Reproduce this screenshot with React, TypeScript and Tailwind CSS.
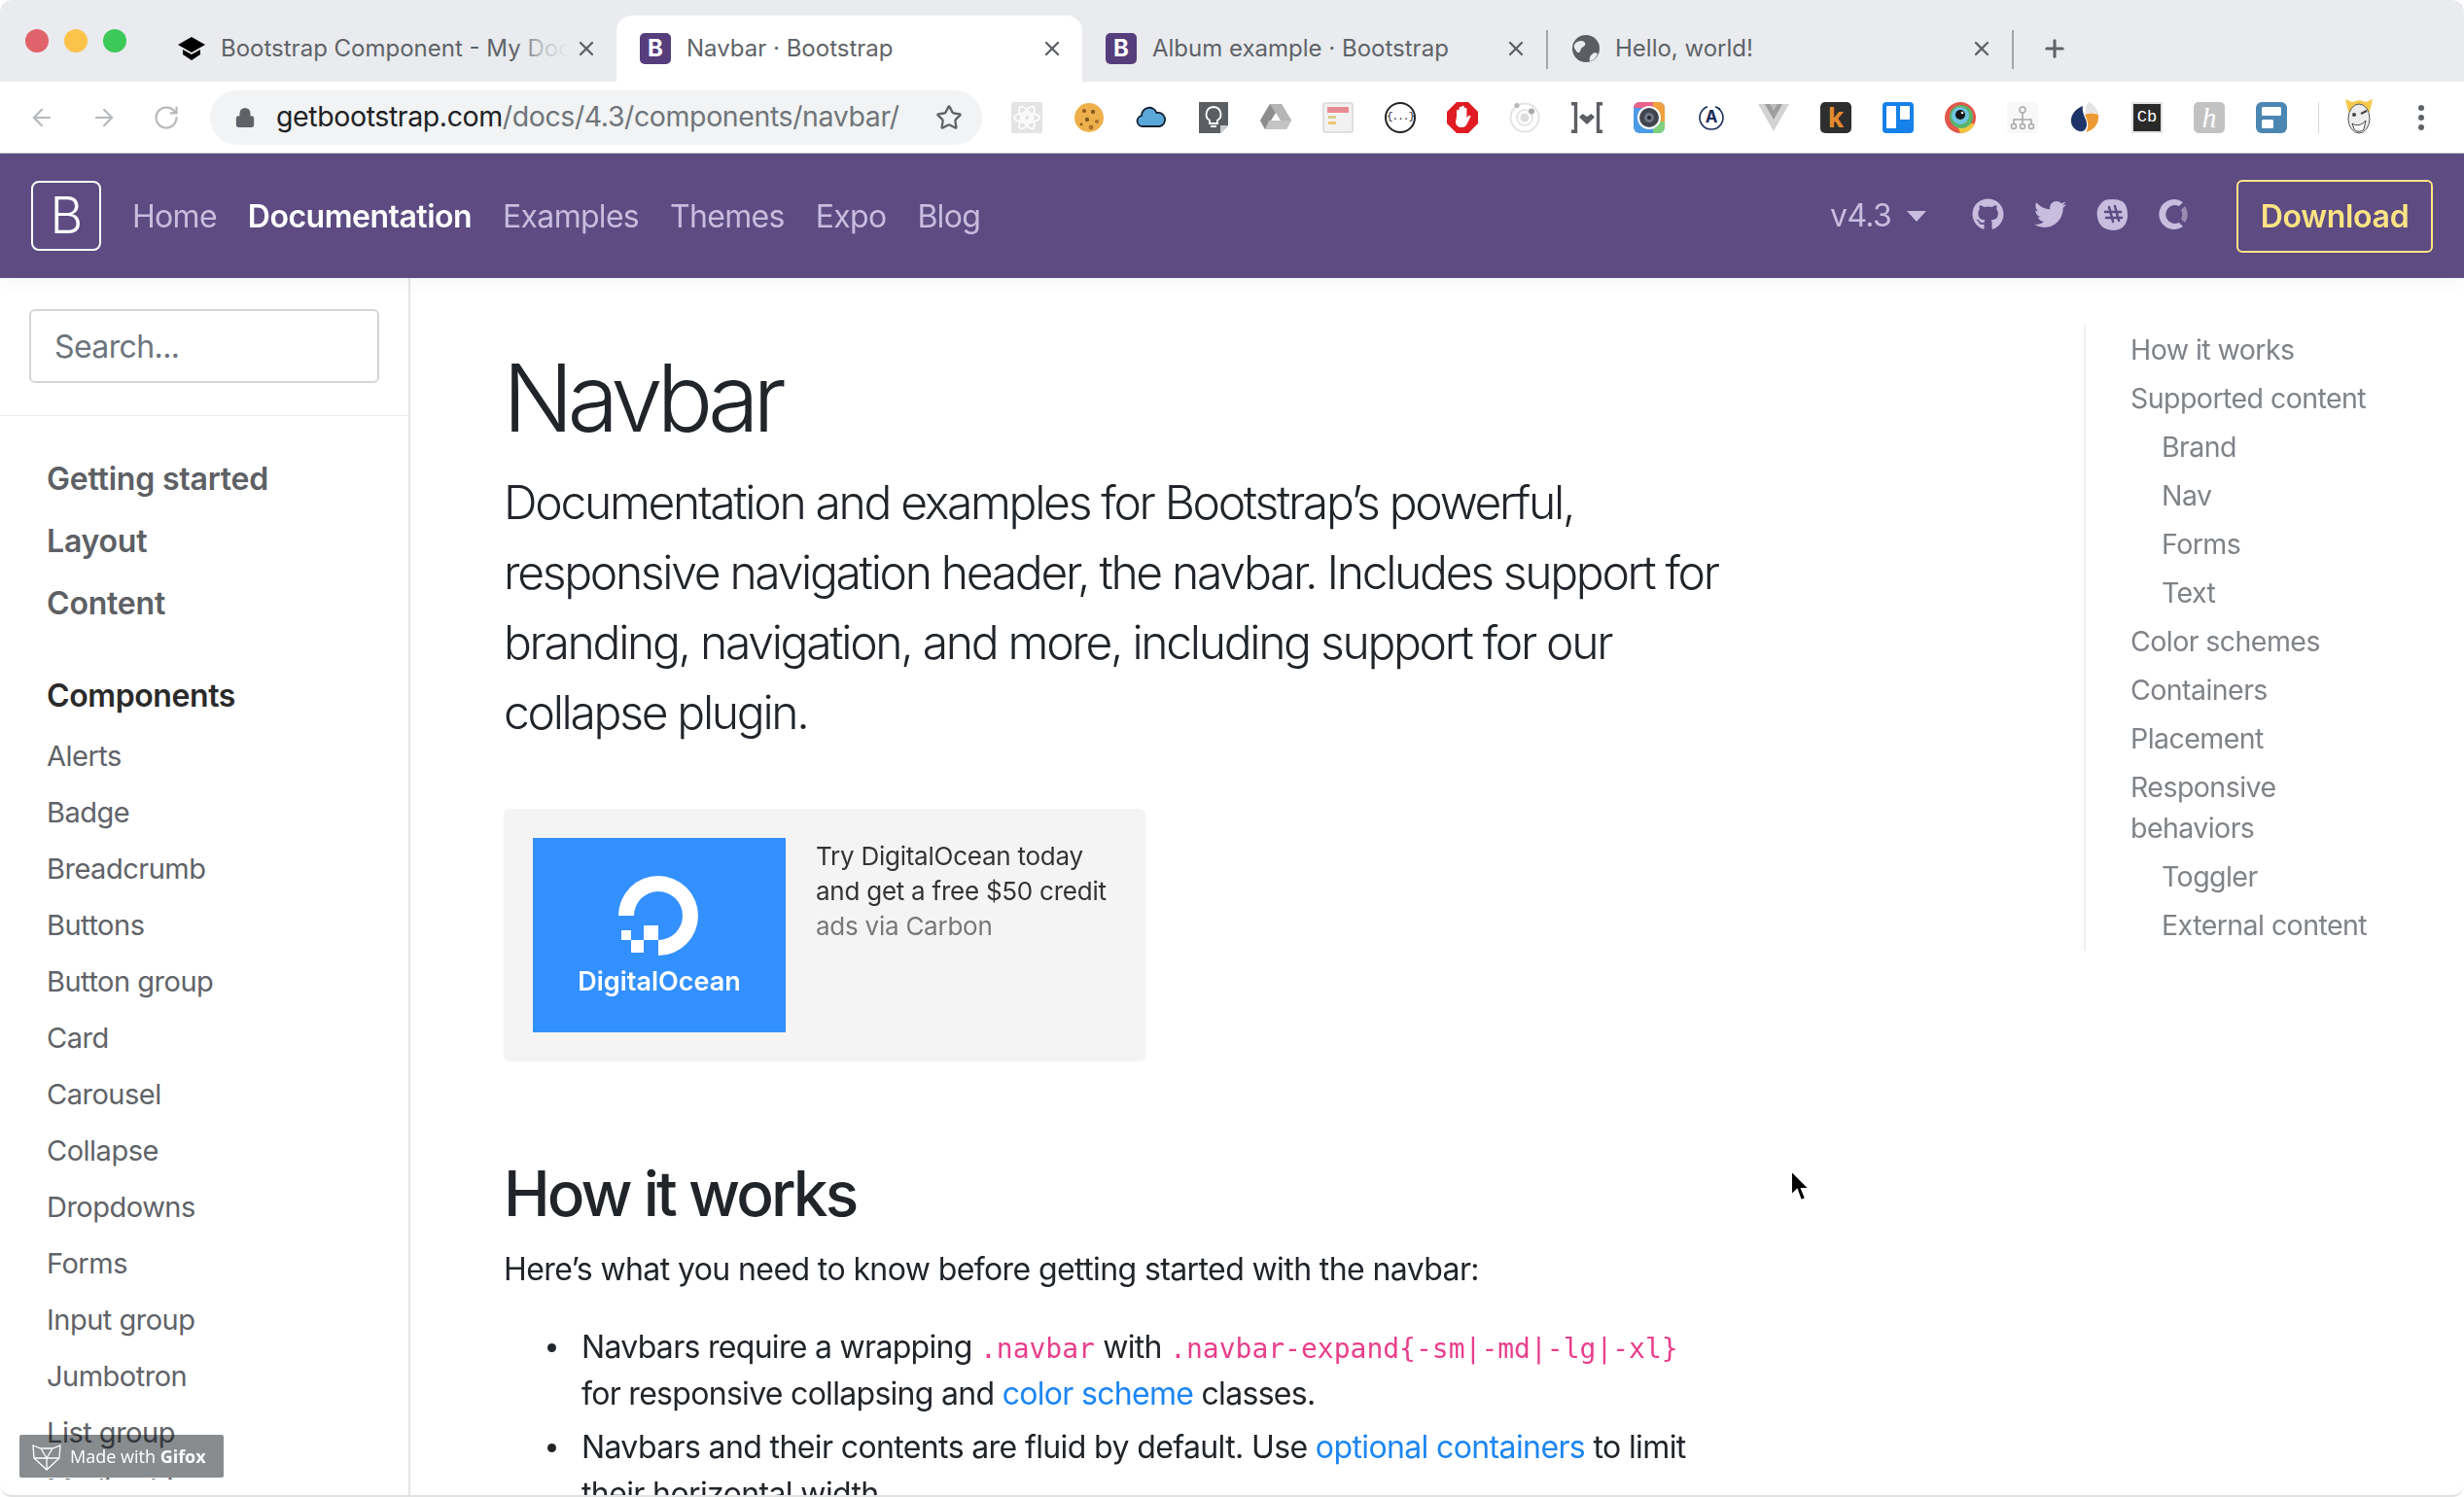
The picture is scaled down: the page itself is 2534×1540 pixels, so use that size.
import { ArrowLeft, ArrowRight, RotateCw, Lock, Star, X, Plus } from 'lucide-react';
import { FaGithub, FaTwitter } from 'react-icons/fa';

const sans = "font-['Inter','Noto_Sans',sans-serif]";

function BIcon() {
  return (
    <div className="flex h-8 w-8 shrink-0 items-center justify-center rounded-[5px] bg-[#563d7c] text-[24px] font-bold leading-none text-white">
      B
    </div>
  );
}

function Tab({ icon, title, active, width, faded, tight }: { icon: React.ReactNode; title: string; active?: boolean; width: number; faded?: boolean; tight?: boolean }) {
  return (
    <div
      style={{ width }}
      className={`relative flex h-[68px] shrink-0 items-center pl-6 pr-[19px] ${active ? 'rounded-t-[16px] bg-white' : ''}`}
    >
      <div className={`flex w-8 shrink-0 justify-center ${tight ? 'mr-[13px]' : 'mr-4'}`}>{icon}</div>
      <div className="min-w-0 flex-1 overflow-hidden whitespace-nowrap text-[24px] text-[#5f6368]">{title}</div>
      {faded && <div className="absolute right-[48px] top-0 h-full w-14 bg-gradient-to-r from-transparent via-[#e9ebee]/70 to-[#e9ebee]" />}
      <X className="ml-2 shrink-0 text-[#5f6368]" size={24} strokeWidth={2.4} />
    </div>
  );
}

function Extensions() {
  return (
    <div className="flex items-center gap-8 pl-[30px]">
      <svg width="32" height="32" viewBox="0 0 32 32">
        <rect width="32" height="32" rx="2" fill="#e4e4e4" />
        <g fill="none" stroke="#fff" strokeWidth="1.6">
          <ellipse cx="16" cy="16" rx="13" ry="5" />
          <ellipse cx="16" cy="16" rx="13" ry="5" transform="rotate(60 16 16)" />
          <ellipse cx="16" cy="16" rx="13" ry="5" transform="rotate(120 16 16)" />
          <circle cx="16" cy="16" r="3" />
        </g>
      </svg>
      <svg width="32" height="32" viewBox="0 0 32 32">
        <circle cx="16" cy="16" r="15" fill="#eeb04c" />
        <circle cx="11" cy="9" r="2" fill="#8a5a20" />
        <circle cx="20" cy="10" r="2.2" fill="#8a5a20" />
        <circle cx="14" cy="18" r="2.2" fill="#8a5a20" />
        <circle cx="24" cy="20" r="2" fill="#a86f2a" />
        <circle cx="18" cy="26" r="2.4" fill="#a86f2a" />
        <circle cx="8" cy="23" r="1.4" fill="#8a5a20" />
      </svg>
      <svg width="32" height="32" viewBox="0 0 32 32">
        <path d="M7 25a5.500 5.500 0 0 1-1-10.900A8 8 0 0 1 21.500 11a7 7 0 0 1 3 14z" fill="#5ba7d9" stroke="#10212f" strokeWidth="1.8" />
      </svg>
      <svg width="32" height="32" viewBox="0 0 32 32">
        <path d="M1 0h30v24l-8 8H1z" fill="#5b5e62" />
        <path d="M31 24h-8v8z" fill="#c9cacb" />
        <path d="M16 5a7.500 7.500 0 0 0-4 13.800V22h8v-3.200A7.500 7.500 0 0 0 16 5zM13 25h6" fill="none" stroke="#fff" strokeWidth="1.8" />
      </svg>
      <svg width="32" height="32" viewBox="0 0 32 32">
        <path d="M10 2h12l10 17-5 9H5l-5-9z" fill="#a9a9a9" />
        <path d="M10 2l6 10-11 16-5-9z" fill="#8d8d8d" />
        <path d="M10 2h12l10 17H22z" fill="#b5b5b5" />
        <path d="M9 19h23l-5 9H5z" fill="#c4c4c4" />
        <path d="M11 19l5-8 5 8z" fill="#fff" />
      </svg>
      <svg width="32" height="32" viewBox="0 0 32 32">
        <rect x="1" y="1" width="30" height="30" rx="2" fill="#f1f1f1" stroke="#d8d8d8" strokeWidth="1.5" />
        <rect x="5" y="5" width="22" height="6" fill="#e88b90" />
        <rect x="6" y="14" width="8" height="3" fill="#d8cf8a" />
        <rect x="6" y="20" width="8" height="3" fill="#ecc870" />
      </svg>
      <div className="flex h-8 w-8 items-center justify-center rounded-full border-2 border-[#222] font-['Liberation_Mono',monospace] text-[11px] leading-none tracking-[-1px] text-[#222]">
        {'{...}'}
      </div>
      <svg width="32" height="32" viewBox="0 0 32 32">
        <path d="M10 0h12l10 10v12L22 32H10L0 22V10z" fill="#e01b22" />
        <path d="M10 15V9a1.300 1.300 0 0 1 2.600 0V6a1.300 1.300 0 0 1 2.600 0V5a1.300 1.300 0 0 1 2.600 0v2a1.300 1.300 0 0 1 2.600 0v9l2-2c2-1 2.500 1 1.500 2l-3.500 7c-1 2-2.600 3-5 3-4 0-6.400-2-6.400-6z" fill="#fff" />
      </svg>
      <svg width="32" height="32" viewBox="0 0 32 32">
        <circle cx="16" cy="16" r="14.500" fill="none" stroke="#e4e4e4" strokeWidth="2" />
        <circle cx="16" cy="16" r="8" fill="none" stroke="#e4e4e4" strokeWidth="2" />
        <circle cx="16" cy="16" r="4.500" fill="#dcdcdc" />
        <circle cx="23" cy="9.500" r="3" fill="#a8a8a8" />
        <circle cx="8" cy="3.500" r="2.600" fill="#b8b8b8" />
      </svg>
      <svg width="32" height="32" viewBox="0 0 32 32" fill="none" stroke="#5c5f63" strokeWidth="3.400">
        <path d="M0 1.700h4.500v28.600H0M32 1.700h-4.500v28.600H32" />
        <path d="M16 23l-8-7.500 3.500-3.500 4.500 3 4.500-3 3.500 3.500z" fill="#5c5f63" stroke="none" />
      </svg>
      <svg width="32" height="32" viewBox="0 0 32 32">
        <rect width="32" height="32" rx="6" fill="#4d9be6" />
        <path d="M20 0h6a6 6 0 0 1 6 6v14H20z" fill="#f0a03c" />
        <path d="M20 20h12v6a6 6 0 0 1-6 6H20z" fill="#7fd07c" />
        <path d="M6 0h14v6H0a6 6 0 0 1 6-6z" fill="#e8638a" />
        <circle cx="16" cy="16" r="12" fill="#fff" />
        <circle cx="16" cy="16" r="10" fill="#40454e" />
        <circle cx="16" cy="16" r="5" fill="#6d7683" />
        <circle cx="16" cy="16" r="2" fill="#22252a" />
      </svg>
      <div className="relative flex h-8 w-8 items-center justify-center">
        <svg className="absolute inset-0" width="32" height="32" viewBox="0 0 32 32" fill="none" stroke="#1a2c5b" strokeWidth="1.600">
          <path d="M20 4.700A12 12 0 1 1 12 4.700" />
          <circle cx="24" cy="7" r="1.200" fill="#1a2c5b" stroke="none" />
        </svg>
        <span className="text-[17px] font-bold leading-none text-[#1a2c5b]">A</span>
      </div>
      <svg width="32" height="32" viewBox="0 0 32 32">
        <path d="M0 2h32L16 30z" fill="#d3d3d3" />
        <path d="M7 2h18L16 18z" fill="#9d9d9d" />
        <path d="M12 2h8l-4 7z" fill="#bdbdbd" />
      </svg>
      <div className="flex h-8 w-8 items-center justify-center rounded-[5px] bg-[#2e2e2e] text-[28px] font-bold leading-none text-[#e58a2e]">
        k
      </div>
      <svg width="32" height="32" viewBox="0 0 32 32">
        <rect width="32" height="32" rx="4" fill="#1681e8" />
        <rect x="4" y="4" width="10" height="23" rx="1" fill="#fff" />
        <rect x="18" y="4" width="10" height="14" rx="1" fill="#fff" />
      </svg>
      <svg width="32" height="32" viewBox="0 0 32 32">
        <circle cx="16" cy="16" r="16" fill="#e2574c" />
        <path d="M16 32a16 16 0 0 0 15-10H12z" fill="#f0c93c" />
        <circle cx="17" cy="15" r="12" fill="#59b46a" />
        <circle cx="16" cy="14" r="9" fill="#6fc4e0" />
        <circle cx="16" cy="13" r="5" fill="#14161a" />
        <circle cx="18" cy="11" r="1.300" fill="#fff" />
      </svg>
      <svg width="32" height="32" viewBox="0 0 32 32" fill="none" stroke="#a8a8a8" strokeWidth="1.500">
        <rect width="32" height="32" rx="4" fill="#f8f8f8" stroke="none" />
        <circle cx="16" cy="8" r="3" />
        <path d="M16 11v7M7 22v-4h18v4M16 18v4" />
        <circle cx="7" cy="25" r="2.500" />
        <circle cx="16" cy="25" r="2.500" />
        <circle cx="25" cy="25" r="2.500" />
      </svg>
      <svg width="32" height="32" viewBox="0 0 32 32">
        <path d="M14 4C6 7 1 14 2 21c1 6 7 10 12 9 4-2 5-7 3-12-2-5-4-9-3-14z" fill="#1d3568" />
        <path d="M17 31c8-2 14-8 13-18-4-2-10-2-14 0 3 6 5 12 1 18z" fill="#ec9a34" />
        <path d="M20 0c3 1 8 5 10 12-4-1-10-1-13 0-1-4 0-9 3-12z" fill="#e4e4e4" />
      </svg>
      <div className="flex h-8 w-8 items-center justify-center border-2 border-[#e3e3e3] bg-[#2a2a2a] font-['Liberation_Mono',monospace] text-[17px] leading-none text-white">
        Cb
      </div>
      <div className="flex h-8 w-8 items-center justify-center rounded-[5px] bg-[#c2c2c2] font-['Liberation_Serif',serif] text-[30px] italic leading-none text-white">
        h
      </div>
      <svg width="32" height="32" viewBox="0 0 32 32">
        <rect width="32" height="32" rx="6" fill="#4c86b2" />
        <rect x="6" y="5" width="20" height="9" rx="1.500" fill="#fff" />
        <rect x="6" y="18" width="12" height="9" rx="1.500" fill="#fff" />
      </svg>
      <div className="h-8 w-px bg-[#d8d8d8]" />
      <svg width="32" height="40" viewBox="0 0 32 40" className="-ml-[7px]">
        <path d="M2 1l7 3 7-2 7 2 7-3-3 13H5z" fill="#f5c94c" />
        <ellipse cx="16" cy="21" rx="11" ry="15" fill="#ececec" stroke="#555" />
        <path d="M9 26c4 3 10 2 14-3l-2 9c-3 3-7 3-10 0z" fill="#fff" stroke="#444" />
        <circle cx="11" cy="17" r="2" fill="#444" />
        <path d="M18 16l6-3" stroke="#444" strokeWidth="2" />
      </svg>
      <div className="flex flex-col gap-[4px] pl-[13px]">
        <div className="h-[6px] w-[6px] rounded-full bg-[#5f6368]" />
        <div className="h-[6px] w-[6px] rounded-full bg-[#5f6368]" />
        <div className="h-[6px] w-[6px] rounded-full bg-[#5f6368]" />
      </div>
    </div>
  );
}

function BrowserChrome() {
  return (
    <div className="shrink-0">
      <div className="flex h-[84px] items-end rounded-t-[12px] bg-[#e9ebee]">
        <div className="flex h-[84px] w-[158px] shrink-0 items-center gap-4 pl-[26px]">
          <div className="h-6 w-6 rounded-full bg-[#e0626a]" />
          <div className="h-6 w-6 rounded-full bg-[#fcc34a]" />
          <div className="h-6 w-6 rounded-full bg-[#3dc85a]" />
        </div>
        <div className="flex items-end">
          <Tab
            faded
            tight
            width={476}
            title="Bootstrap Component - My Document"
            icon={
              <svg width="30" height="26" viewBox="0 0 30 26" className="-ml-[3px]">
                <path d="M15 1l14 8-14 8L1 9z" fill="#000" />
                <path d="M6 14v5l9 6 9-6v-5l-9 5z" fill="#000" />
              </svg>
            }
          />
          <Tab active width={479} title="Navbar · Bootstrap" icon={<BIcon />} />
          <Tab width={477} title="Album example · Bootstrap" icon={<BIcon />} />
          <div className="mb-[13px] h-10 w-0.5 shrink-0 bg-[#a3a6aa]" />
          <Tab
            tight
            width={477}
            title="Hello, world!"
            icon={
              <svg width="28" height="28" viewBox="0 0 28 28" className="-ml-[3px]">
                <circle cx="14" cy="14" r="14" fill="#5a5e62" />
                <path d="M5 7c4-2 7-1 8 1s-1 4-3 5-1 4-3 5-4-3-5-5 1-5 3-6zM18 27c-1-3 0-5 2-7s4-2 6-1c-1 4-4 7-8 8z" fill="#e9ebee" />
              </svg>
            }
          />
          <div className="mb-[13px] h-10 w-0.5 shrink-0 bg-[#a3a6aa]" />
          <Plus className="mb-[20px] ml-[28px] text-[#5f6368]" size={28} strokeWidth={2.6} />
        </div>
      </div>
      <div className="flex h-[74px] items-center border-b border-[#c9c9cc] bg-white">
        <div className="flex w-[216px] shrink-0 items-center gap-9 pl-[29px] text-[#b5b8bb]">
          <ArrowLeft size={28} strokeWidth={1.8} />
          <ArrowRight size={28} strokeWidth={1.8} />
          <RotateCw size={28} strokeWidth={1.8} />
        </div>
        <div className="flex h-14 w-[794px] shrink-0 items-center rounded-full bg-[#f1f3f4] pl-[25px]">
          <Lock size={22} className="mr-[21px] text-[#5f6368]" fill="#5f6368" />
          <div className="w-[678px] whitespace-nowrap text-[28.5px] tracking-[-0.4px] text-[#70757a]">
            <span className="text-[#202124]">getbootstrap.com</span>/docs/4.3/components/navbar/
          </div>
          <Star size={28} strokeWidth={2} className="text-[#5f6368]" />
        </div>
        <Extensions />
      </div>
    </div>
  );
}

function TopNav() {
  return (
    <header className="relative flex h-[128px] shrink-0 items-center justify-between bg-[#5d4b82] pl-8 pr-[32px] text-[32px] tracking-[-0.7px] text-[#c8bcdf] shadow-[0_8px_16px_rgba(0,0,0,0.03)]">
      <div className="flex items-center">
        <div className="flex h-[72px] w-[72px] items-center justify-center rounded-lg border-2 border-white text-[52px] font-light leading-none text-white">
          B
        </div>
        <nav className="ml-8 flex gap-8 pt-[2px]">
          <a>Home</a>
          <a className="font-semibold tracking-[-0.5px] text-white">Documentation</a>
          <a>Examples</a>
          <a>Themes</a>
          <a>Expo</a>
          <a>Blog</a>
        </nav>
      </div>
      <div className="flex items-center">
        <span>v4.3</span>
        <div className="ml-4 mr-[47px] h-0 w-0 border-x-[10px] border-t-[11px] border-x-transparent border-t-[#c8bcdf]" />
        <div className="mb-[3px] flex items-center gap-[31px]">
          <FaGithub size={33} />
          <FaTwitter size={33} />
          <svg width="33" height="33" viewBox="0 0 33 33">
            <path d="M10 1.500c5-1 13-1 17 2s5 9 5 14-2 10-6 13-11 3-16 1-8-6-9-12 0-9 2-12 4-5 7-6z" fill="#c8bcdf" />
            <path d="M13 9l4 15M19 8l4 15M9 14h16M10 20h16" fill="none" stroke="#5d4b82" strokeWidth="2.500" strokeLinecap="round" />
          </svg>
          <svg width="33" height="33" viewBox="0 0 33 33">
            <path d="M16 1a15.500 15.500 0 1 0 9 28l-4-4a9.500 9.500 0 1 1 0-17l4-4a15.500 15.500 0 0 0-9-3z" fill="#c8bcdf" />
            <path d="M27 8a15.500 15.500 0 0 1 0 17l-4-4a9.500 9.500 0 0 0 0-9z" fill="#9a8bb3" />
          </svg>
        </div>
        <div className="ml-[47px] flex h-[75px] w-[202px] items-center justify-center rounded-[6px] border-2 border-[#ffe484] pt-[2px] font-semibold tracking-[-0.3px] text-[#ffe484]">
          Download
        </div>
      </div>
    </header>
  );
}

const components = [
  'Alerts', 'Badge', 'Breadcrumb', 'Buttons', 'Button group', 'Card', 'Carousel', 'Collapse',
  'Dropdowns', 'Forms', 'Input group', 'Jumbotron', 'List group', 'Media object',
];

function Sidebar() {
  return (
    <aside className="w-[422px] shrink-0 overflow-hidden border-r-2 border-[#e6e6e6]">
      <div className="flex h-[142px] items-start border-b border-[#ececec] px-[30px] pt-8">
        <div className="flex h-[76px] w-[360px] items-center rounded-[6px] border-2 border-[#d3d5d8] px-6 pt-[2px] text-[32px] tracking-[-0.6px] text-[#6c757d]">
          Search...
        </div>
      </div>
      <div className="h-[1094px] overflow-hidden px-12 pt-[45px]">
        <div className="flex flex-col gap-[24px] text-[32px] font-semibold leading-[40px] tracking-[-0.2px] text-[#5d6064]">
          <div>Getting started</div>
          <div>Layout</div>
          <div>Content</div>
        </div>
        <div className="mt-[55px] text-[32px] font-semibold leading-[40px] tracking-[-0.4px] text-[#2a2a2a]">Components</div>
        <ul className="mt-[13px] text-[29px] leading-[58px] tracking-[-0.5px] text-[#5f6368]">
          {components.map((c) => (
            <li key={c}>{c}</li>
          ))}
        </ul>
      </div>
    </aside>
  );
}

function DoLogo() {
  return (
    <div className="flex h-[200px] w-[260px] shrink-0 flex-col items-center bg-[#3390ff] pt-[39px] text-white">
      <svg width="84" height="84" viewBox="0 0 84 84">
        <path d="M41 0a41 41 0 0 1 0 82V66a25 25 0 1 0-25-25H0A41 41 0 0 1 41 0z" fill="#fff" />
        <rect x="26" y="51" width="15" height="15" fill="#fff" />
        <rect x="13" y="66" width="13" height="13" fill="#fff" />
        <rect x="3" y="56" width="10" height="10" fill="#fff" />
      </svg>
      <div className="mt-[8px] text-[27px] font-semibold leading-[34px]">DigitalOcean</div>
    </div>
  );
}

function Bullet({ children, className }: { children: React.ReactNode; className?: string }) {
  return (
    <li className={`flex ${className ?? ''}`}>
      <div className="mr-[26px] mt-[20px] h-[9px] w-[9px] shrink-0 rounded-full bg-[#212529]" />
      <div>{children}</div>
    </li>
  );
}

function Article() {
  const code = "font-['DejaVu_Sans_Mono',monospace] text-[28px] leading-none tracking-normal text-[#e83e8c]";
  return (
    <main className="flex-1 overflow-hidden pl-[96px]">
      <div className="w-[1262px]">
        <h1 className="-ml-px mt-[66px] text-[96px] font-light leading-[115px] tracking-[-6.4px] text-[#212529]">Navbar</h1>
        <p className="mt-[14px] text-[48px] font-light leading-[72px] tracking-[-2.3px] text-[#212529]">
          Documentation and examples for Bootstrap’s powerful, responsive navigation header, the navbar. Includes support for branding, navigation, and more, including support for our collapse plugin.
        </p>
        <div className="mt-[63px] flex h-[260px] w-[660px] rounded-[6px] bg-[#f4f4f4] p-[30px]">
          <DoLogo />
          <div className="ml-[31px] pt-[1px] text-[26px] leading-[36px] tracking-[-0.25px] text-[#333]">
            <div>Try DigitalOcean today</div>
            <div className="whitespace-nowrap">and get a free $50 credit</div>
            <div className="text-[#777]">ads via Carbon</div>
          </div>
        </div>
        <h2 className="mt-[97px] text-[64px] font-medium leading-[77px] tracking-[-2.9px] text-[#212529]">How it works</h2>
        <p className="mt-[16px] text-[32px] leading-[48px] tracking-[-0.6px] text-[#212529]">
          Here’s what you need to know before getting started with the navbar:
        </p>
        <ul className="mr-[35px] mt-[32px] pl-[45px] text-[32px] leading-[48px] tracking-[-0.7px] text-[#212529]">
          <Bullet>
            Navbars require a wrapping <code className={code}>.navbar</code> with{' '}
            <code className={code}>.navbar-expand{'{-sm|-md|-lg|-xl}'}</code> for responsive collapsing and{' '}
            <a className="text-[#1c86f2]">color scheme</a> classes.
          </Bullet>
          <Bullet className="mt-[7px] tracking-[-0.62px]">
            Navbars and their contents are fluid by default. Use <a className="text-[#1c86f2]">optional containers</a> to limit their horizontal width.
          </Bullet>
        </ul>
      </div>
    </main>
  );
}

const toc: [string, boolean][] = [
  ['How it works', false], ['Supported content', false], ['Brand', true], ['Nav', true], ['Forms', true], ['Text', true],
  ['Color schemes', false], ['Containers', false], ['Placement', false], ['Responsive behaviors', false],
  ['Toggler', true], ['External content', true],
];

function Toc() {
  return (
    <div className="w-[391px] shrink-0 pt-[48px]">
      <ul className="w-full border-l-2 border-[#f0f0f0] pb-[1px] pl-[46px] pr-[60px] pt-[1px] text-[28.5px] leading-[42px] tracking-[-0.55px] text-[#7f8387]">
        {toc.map(([label, nested]) => (
          <li key={label} className={`py-1 ${nested ? 'pl-8' : ''}`}>
            {label}
          </li>
        ))}
      </ul>
    </div>
  );
}

export default function App() {
  return (
    <div className={`relative flex h-[1540px] w-[2534px] flex-col overflow-hidden rounded-[12px] border-b-2 border-[#e2e2e2] bg-white ${sans}`}>
      <BrowserChrome />
      <TopNav />
      <div className="flex min-h-0 flex-1">
        <Sidebar />
        <Article />
        <Toc />
      </div>
      {/* badge tint multiplies over the list underneath, its label sits on top */}
      <div className="absolute bottom-[18px] left-[20px] h-11 w-[210px]">
        <div className="absolute inset-0 rounded-[2px] bg-[#888c8f] mix-blend-multiply" />
        <div className="absolute inset-0 flex items-center gap-[8px] pl-[12px] font-['Open_Sans',sans-serif] text-[18px] text-white">
          <svg width="32" height="30" viewBox="0 0 32 30" fill="none" stroke="#fff" strokeWidth="1.300">
            <path d="M2 4l8 3h12l8-3-1 13-13 12L3 17zM10 7l6 10 6-10M3 17l13 0 13 0M16 17v12" />
          </svg>
          <span>
            Made with <b>Gifox</b>
          </span>
        </div>
      </div>
      <svg className="absolute left-[1840px] top-[1202px]" width="24" height="36" viewBox="0 0 24 36">
        <path d="M2 2v26l6-6 4 11 5-2-4-10h8z" fill="#000" stroke="#fff" strokeWidth="2" />
      </svg>
    </div>
  );
}
